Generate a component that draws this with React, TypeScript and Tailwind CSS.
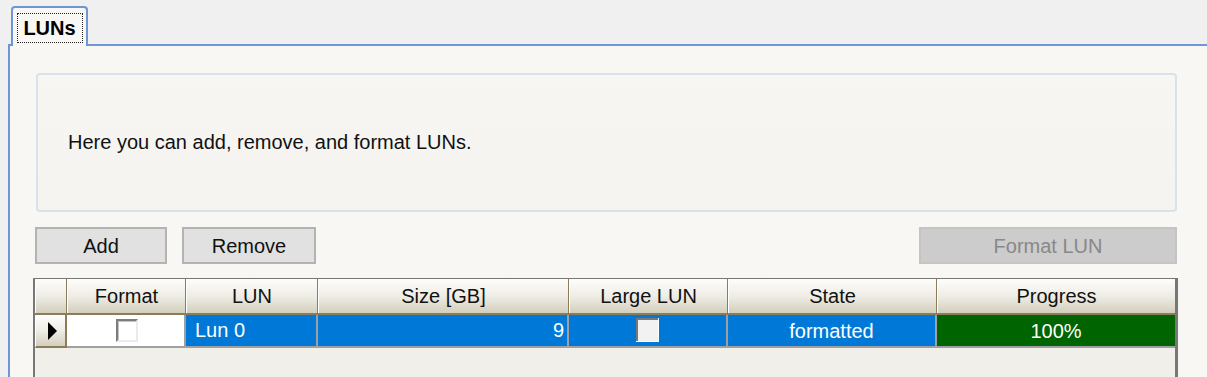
import React from "react";

const font = { fontFamily: '"Liberation Sans", Arial, sans-serif' };

function HeaderCell({ w, children, last }: { w: string; children?: React.ReactNode; last?: boolean }) {
  return (
    <div
      className={`${w} h-full flex items-center justify-center border-l border-l-white ${last ? "" : "border-r border-r-[#8b7d5a]"} bg-gradient-to-b from-[#fdfdfb] via-[#efede6] to-[#d3cfbd] text-[20px] text-[#111]`}
    >
      {children}
    </div>
  );
}

function Check({ fill }: { fill: string }) {
  return (
    <div className="w-[22px] h-[23px] border-t-2 border-l-2 border-t-[#7d7d7d] border-l-[#7d7d7d] border-b-2 border-r-2 border-b-[#ebebeb] border-r-[#ebebeb]">
      <div className={`w-full h-full ${fill} border-t border-l border-[#c4c4c4]`} />
    </div>
  );
}

export default function App() {
  return (
    <div className="w-[1207px] h-[377px] overflow-hidden bg-[#f0f0f0] text-black" style={font}>
      {/* tab strip */}
      <div className="h-[44px] pl-[11px] pt-[6px] flex items-end">
        <div className="relative z-10 w-[77px] h-[40px] mb-[-2px] bg-[#f8f7f3] border-2 border-b-0 border-[#6f96d4] rounded-t-[4px] flex items-start justify-center pt-[5px]">
          <div className="w-[66px] h-[30px] border border-dotted border-[#222] flex items-center justify-center font-bold text-[20px] leading-none">
            LUNs
          </div>
        </div>
      </div>
      {/* panel */}
      <div className="ml-[8px] h-[340px] border-l-2 border-t-2 border-[#6f96d4] bg-[#f8f7f3] pt-[27px] pl-[26px]">
        {/* group box */}
        <div className="w-[1141px] h-[139px] border-2 border-[#d8e2ea] rounded-[4px] bg-gradient-to-b from-[#f7f6f3] to-[#f4f3ef] flex items-center pl-[30px] pb-[2px]">
          <span className="text-[20px] text-[#111]">Here you can add, remove, and format LUNs.</span>
        </div>
        {/* buttons */}
        <div className="mt-[15px] ml-[-1px] w-[1142px] flex items-center">
          <div className="w-[132px] h-[37px] border-2 border-[#b3b3b3] bg-[#e1e1e1] flex items-center justify-center text-[20px] text-[#111]">
            Add
          </div>
          <div className="ml-[15px] w-[134px] h-[37px] border-2 border-[#b3b3b3] bg-[#e1e1e1] flex items-center justify-center text-[20px] text-[#111]">
            Remove
          </div>
          <div className="ml-auto w-[258px] h-[37px] border-2 border-[#c4c4c4] bg-[#cccccc] flex items-center justify-center text-[20px] text-[#888888]">
            Format LUN
          </div>
        </div>
        {/* grid */}
        <div className="mt-[14px] ml-[-3px] w-[1145px] h-[120px] border-l-2 border-t border-r-[3px] border-[#777777] bg-[#f0efea]">
          {/* header */}
          <div className="flex h-[36px] border-b-2 border-[#8b7d5a]">
            <HeaderCell w="w-[32px]" />
            <HeaderCell w="w-[119px]">Format</HeaderCell>
            <HeaderCell w="w-[132px]">LUN</HeaderCell>
            <HeaderCell w="w-[251px]">Size [GB]</HeaderCell>
            <HeaderCell w="w-[159px]">Large LUN</HeaderCell>
            <HeaderCell w="w-[209px]">State</HeaderCell>
            <HeaderCell w="w-[238px]" last>Progress</HeaderCell>
          </div>
          {/* data row */}
          <div className="flex h-[33px] text-[20px]">
            <div className="w-[32px] h-full flex items-center justify-center border-r-2 border-b-2 border-[#8b7d5a] border-l border-l-white bg-gradient-to-b from-[#fdfdfb] via-[#efede6] to-[#d3cfbd]">
              <svg width="10" height="18" viewBox="0 0 10 18" className="ml-[4px]">
                <polygon points="0,0 9,9 0,18" fill="#000" />
              </svg>
            </div>
            <div className="w-[119px] h-full bg-white border-r-2 border-b-2 border-[#a0a0a0] flex items-center justify-center pl-[2px]">
              <Check fill="bg-white" />
            </div>
            <div className="w-[132px] h-full bg-[#0078d7] border-r-2 border-b-2 border-[#a0a0a0] text-white flex items-center pl-[9px] pb-[2px]">
              Lun 0
            </div>
            <div className="w-[251px] h-full bg-[#0078d7] border-r-2 border-b-2 border-[#a0a0a0] text-white flex items-center justify-end pr-[3px] pb-[2px]">
              9
            </div>
            <div className="w-[159px] h-full bg-[#0078d7] border-r-2 border-b-2 border-[#a0a0a0] flex items-center justify-center pb-[2px]">
              <div className="w-[23px] h-[24px] bg-white pr-[1px] pb-[1px]">
                <div className="w-full h-full border-t-2 border-l-2 border-[#777777] bg-[#f2f2f2]" />
              </div>
            </div>
            <div className="w-[209px] h-full bg-[#0078d7] border-r-2 border-b-2 border-[#a0a0a0] text-white flex items-center justify-center">
              formatted
            </div>
            <div className="w-[238px] h-full bg-[#006400] border-b-2 border-[#a0a0a0] text-white flex items-center justify-center">
              100%
            </div>
          </div>
        </div>
      </div>
    </div>
  );
}
